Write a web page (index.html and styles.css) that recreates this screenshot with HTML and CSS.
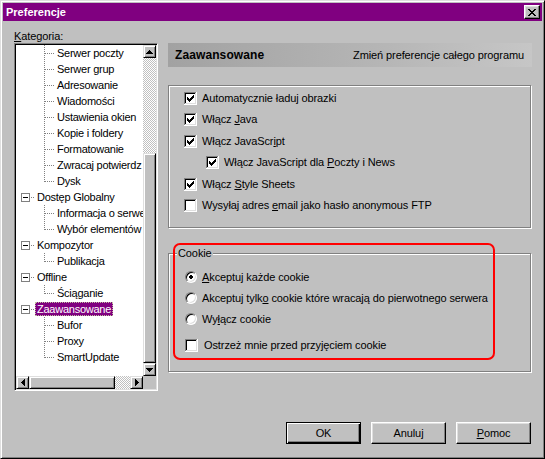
FILE: index.html
```html
<!DOCTYPE html>
<html lang="pl">
<head>
<meta charset="utf-8">
<title>Preferencje</title>
<link rel="stylesheet" href="styles.css">
</head>
<body>
<svg class="defs" width="0" height="0" aria-hidden="true">
  <defs>
    <symbol id="cb-frame" viewBox="0 0 13 13">
      <path d="M0 0h12v1H1v11H0z" fill="#808080"/>
      <path d="M12 0h1v13H0v-1h12z" fill="#fff"/>
      <path d="M1 1h10v1H2v9H1z" fill="#000"/>
      <path d="M11 1h1v11H1v-1h10z" fill="#dfdfdf"/>
      <rect x="2" y="2" width="9" height="9" fill="#fff"/>
    </symbol>
    <symbol id="cb-check" viewBox="0 0 13 13">
      <path d="M9 3h1v1H9zM8 4h2v1H8zM3 5h1v1H3zM7 5h3v1H7zM3 6h2v1H3zM6 6h3v1H6zM3 7h5v1H3zM4 8h3v1H4zM5 9h1v1H5z" fill="#000"/>
    </symbol>
  </defs>
</svg>
<div class="window">
  <div class="titlebar">
    <span class="title">Preferencje</span>
    <span class="close">
      <svg width="8" height="7" viewBox="0 0 8 7" shape-rendering="crispEdges"><path d="M0 0h2v1H0zM6 0h2v1H6zM1 1h2v1H1zM5 1h2v1H5zM2 2h4v1H2zM3 3h2v1H3zM2 4h4v1H2zM1 5h2v1H1zM5 5h2v1H5zM0 6h2v1H0zM6 6h2v1H6z" fill="#000"/></svg>
    </span>
  </div>

  <div class="main">
    <div class="left">
      <div class="cat-label"><u>K</u>ategoria:</div>
      <div class="treebox">
        <div class="tree">
          <div class="row l2"><span class="guide"></span><span class="lbl">Serwer poczty</span></div>
          <div class="row l2"><span class="guide"></span><span class="lbl">Serwer grup</span></div>
          <div class="row l2"><span class="guide"></span><span class="lbl">Adresowanie</span></div>
          <div class="row l2"><span class="guide"></span><span class="lbl">Wiadomości</span></div>
          <div class="row l2"><span class="guide"></span><span class="lbl">Ustawienia okien</span></div>
          <div class="row l2"><span class="guide"></span><span class="lbl">Kopie i foldery</span></div>
          <div class="row l2"><span class="guide"></span><span class="lbl">Formatowanie</span></div>
          <div class="row l2"><span class="guide"></span><span class="lbl">Zwracaj potwierdz</span></div>
          <div class="row l2"><span class="guide last"></span><span class="lbl">Dysk</span></div>
          <div class="row l1"><span class="pm"></span><span class="hd"></span><span class="lbl">Dostęp Globalny</span></div>
          <div class="row l2"><span class="guide"></span><span class="lbl">Informacja o serwe</span></div>
          <div class="row l2"><span class="guide last"></span><span class="lbl">Wybór elementów</span></div>
          <div class="row l1"><span class="pm"></span><span class="hd"></span><span class="lbl">Kompozytor</span></div>
          <div class="row l2"><span class="guide last"></span><span class="lbl">Publikacja</span></div>
          <div class="row l1"><span class="pm"></span><span class="hd"></span><span class="lbl">Offline</span></div>
          <div class="row l2"><span class="guide last"></span><span class="lbl">Ściąganie</span></div>
          <div class="row l1"><span class="pm"></span><span class="hd"></span><span class="lbl sel">Zaawansowane</span></div>
          <div class="row l2"><span class="guide"></span><span class="lbl">Bufor</span></div>
          <div class="row l2"><span class="guide"></span><span class="lbl">Proxy</span></div>
          <div class="row l2"><span class="guide last"></span><span class="lbl">SmartUpdate</span></div>
        </div>
        <div class="vscroll">
          <span class="sb-btn raised"><svg width="7" height="4" viewBox="0 0 7 4"><path d="M3 0h1v1h1v1h1v1h1v1H0V3h1V2h1V1h1z" fill="#000"/></svg></span>
          <span class="track-v"></span>
          <span class="thumb-v raised"></span>
          <span class="sb-btn raised"><svg width="7" height="4" viewBox="0 0 7 4"><path d="M0 0h7v1H6v1H5v1H4v1H3V3H2V2H1V1H0z" fill="#000"/></svg></span>
        </div>
        <div class="hscroll">
          <span class="sb-btn raised"><svg width="4" height="7" viewBox="0 0 4 7"><path d="M3 0h1v7H3V6H2V5H1V4H0V3h1V2h1V1h1z" fill="#000"/></svg></span>
          <span class="thumb-h raised"></span>
          <span class="track-h"></span>
          <span class="sb-btn raised"><svg width="4" height="7" viewBox="0 0 4 7"><path d="M0 0h1v1h1v1h1v1h1v1H3v1H2v1H1v1H0z" fill="#000"/></svg></span>
        </div>
        <div class="corner"></div>
      </div>
    </div>

    <div class="right">
      <div class="header">
        <span class="h-title">Zaawansowane</span>
        <span class="h-desc">Zmień preferencje całego programu</span>
      </div>

      <div class="group g1">
        <div class="crow"><svg class="cb" viewBox="0 0 13 13"><use href="#cb-frame"/><use href="#cb-check"/></svg><span class="ctext">Automatycznie ładuj obrazki</span></div>
        <div class="crow"><svg class="cb" viewBox="0 0 13 13"><use href="#cb-frame"/><use href="#cb-check"/></svg><span class="ctext">Włącz <u>J</u>ava</span></div>
        <div class="crow"><svg class="cb" viewBox="0 0 13 13"><use href="#cb-frame"/><use href="#cb-check"/></svg><span class="ctext">Włącz JavaScr<u>i</u>pt</span></div>
        <div class="crow nested"><svg class="cb" viewBox="0 0 13 13"><use href="#cb-frame"/><use href="#cb-check"/></svg><span class="ctext">Włącz JavaScript dla <u>P</u>oczty i News</span></div>
        <div class="crow"><svg class="cb" viewBox="0 0 13 13"><use href="#cb-frame"/><use href="#cb-check"/></svg><span class="ctext">Włącz <u>S</u>tyle Sheets</span></div>
        <div class="crow"><svg class="cb" viewBox="0 0 13 13"><use href="#cb-frame"/></svg><span class="ctext">Wysyłaj adres <u>e</u>mail jako hasło anonymous FTP</span></div>
      </div>

      <div class="group g2">
        <div class="legend">Cookie</div>
        <div class="rrow first"><span class="radio on"></span><span class="ctext"><u>A</u>kceptuj każde cookie</span></div>
        <div class="rrow"><span class="radio"></span><span class="ctext">Akceptuj tylk<u>o</u> cookie które wracają do pierwotnego serwera</span></div>
        <div class="rrow"><span class="radio"></span><span class="ctext">Wy<u>ł</u>ącz cookie</span></div>
        <div class="crow warn"><svg class="cb" viewBox="0 0 13 13"><use href="#cb-frame"/></svg><span class="ctext">Ostrzeż mnie przed przyjęciem cookie</span></div>
      </div>
    </div>
  </div>

  <div class="buttons">
    <span class="btn default">OK</span>
    <span class="btn">Anuluj</span>
    <span class="btn"><u>P</u>omoc</span>
  </div>

  <div class="annot"></div>
</div>
</body>
</html>
```
FILE: styles.css
```css
* { box-sizing: border-box; }

body {
  margin: 0;
  background: #c0c0c0;
  font-family: "Liberation Sans", Arial, sans-serif;
  font-size: 11px;
  letter-spacing: -0.1px;
  color: #000;
}

.defs { position: absolute; width: 0; height: 0; overflow: hidden; }

u { text-decoration: underline; text-underline-offset: 1px; }

.window {
  position: relative;
  width: 545px;
  height: 459px;
  background: #c0c0c0;
  border: 1px solid;
  border-color: #dfdfdf #000 #000 #dfdfdf;
  box-shadow: inset 1px 1px #fff, inset -1px -1px #808080;
  padding: 2px;
  display: flex;
  flex-direction: column;
}

/* title bar */
.titlebar {
  height: 18px;
  flex: none;
  background: #800080;
  color: #fff;
  display: flex;
  align-items: center;
  justify-content: space-between;
  padding: 0 2px 0 3px;
}
.title { font-weight: bold; font-size: 11px; letter-spacing: 0; }
.close {
  width: 16px;
  height: 14px;
  background: #c0c0c0;
  border: 1px solid;
  border-color: #fff #000 #000 #fff;
  box-shadow: inset -1px -1px #808080, inset 1px 1px #dfdfdf;
  display: flex;
  align-items: center;
  justify-content: center;
}
.close svg { display: block; }

/* main area */
.main {
  display: flex;
  align-items: flex-start;
  gap: 10px;
  padding-left: 11px;
}
.left { width: 144px; margin-top: 8px; }
.right { width: 364px; margin-top: 22px; }

.cat-label { height: 14px; line-height: 14px; }

/* tree box */
.treebox {
  width: 144px;
  height: 348px;
  border: 1px solid;
  border-color: #808080 #fff #fff #808080;
  box-shadow: inset 1px 1px #000, inset -1px -1px #dfdfdf;
  padding: 1px;
  display: grid;
  grid-template-columns: 127px 13px;
  grid-template-rows: 331px 13px;
}
.tree {
  background: #fff;
  overflow: hidden;
}
.row {
  height: 16px;
  display: flex;
  align-items: flex-start;
  white-space: nowrap;
}
.l2 { padding-left: 28px; }
.l1 { padding-left: 5px; }

.guide {
  flex: none;
  width: 11px;
  height: 16px;
  background:
    repeating-linear-gradient(to bottom, #808080 0 1px, transparent 1px 2px) 0 0 / 1px 16px no-repeat,
    repeating-linear-gradient(to right, #808080 0 1px, transparent 1px 2px) 1px 8px / 10px 1px no-repeat;
}
.guide.last {
  background-size: 1px 9px, 10px 1px;
}
.pm {
  flex: none;
  width: 9px;
  height: 9px;
  margin-top: 4px;
  border: 1px solid #808080;
  background: linear-gradient(#000, #000) 1px 3px / 5px 1px no-repeat, #fff;
}
.hd {
  flex: none;
  width: 5px;
  height: 1px;
  margin-top: 8px;
  background: repeating-linear-gradient(to right, #fff 0 1px, #808080 1px 2px);
}
.lbl {
  height: 14px;
  line-height: 14px;
  margin-top: 1px;
  padding: 0 2px;
  letter-spacing: -0.25px;
}
.lbl.sel {
  background: #800080;
  color: #fff;
  outline: 1px dotted #c0c0a0;
  outline-offset: -1px;
}

/* scrollbars */
.raised {
  background: #c0c0c0;
  border: 1px solid;
  border-color: #dfdfdf #000 #000 #dfdfdf;
  box-shadow: inset 1px 1px #fff, inset -1px -1px #808080;
}
.sb-btn {
  flex: none;
  width: 13px;
  height: 13px;
  display: flex;
  align-items: center;
  justify-content: center;
}
.sb-btn svg { display: block; }
.vscroll { display: flex; flex-direction: column; }
.hscroll { display: flex; }
.track-v, .track-h {
  flex: none;
  background: repeating-conic-gradient(#c0c0c0 0 25%, #fff 0 50%) 0 0 / 2px 2px;
}
.track-v { height: 95px; }
.thumb-v { flex: none; height: 210px; }
.thumb-h { flex: none; width: 86px; }
.track-h { width: 15px; }
.corner { background: #c0c0c0; }

/* right panel */
.header {
  height: 24px;
  display: flex;
  align-items: center;
  justify-content: space-between;
  padding: 0 8px 0 7px;
  background: linear-gradient(to right, #a2a2a2, #b6b6b6 60%, #c6c6c6);
}
.h-title { font-weight: bold; font-size: 12px; letter-spacing: 0.1px; }

.group {
  width: 363px;
  border: 1px solid #808080;
  box-shadow: inset 1px 1px #fff, 1px 1px #fff;
}
.g1 { margin-top: 18px; height: 143px; padding-top: 2px; }
.g2 { margin-top: 25px; height: 119px; }

.crow {
  height: 21px;
  display: flex;
  align-items: flex-start;
  padding-left: 15px;
  white-space: nowrap;
}
.g1 .crow:nth-child(even) { height: 22px; }
.crow.nested { padding-left: 37px; }
.cb {
  flex: none;
  width: 13px;
  height: 13px;
  margin-top: 4px;
  margin-right: 5px;
  shape-rendering: crispEdges;
}
.ctext { line-height: 21px; height: 21px; }

.legend {
  width: fit-content;
  height: 13px;
  line-height: 13px;
  margin: -7px 0 0 8px;
  padding: 0 1px;
  background: #c0c0c0;
}
.rrow {
  height: 21px;
  display: flex;
  align-items: flex-start;
  padding-left: 16px;
  white-space: nowrap;
}
.rrow.first { margin-top: 7px; }
.radio {
  flex: none;
  width: 12px;
  height: 12px;
  margin-top: 4px;
  margin-right: 5px;
  border-radius: 50%;
  border: 1px solid;
  border-color: #808080 #fff #fff #808080;
  box-shadow: inset 1px 1px #000, inset -1px -1px #dfdfdf;
  background: #fff;
}
.radio.on {
  background: radial-gradient(circle, #000 0 2px, #fff 2.1px);
}
.crow.warn { margin-top: 5px; padding-left: 16px; }
.crow.warn .cb { margin-right: 6px; }

/* buttons */
.buttons {
  margin-top: auto;
  margin-bottom: 12px;
  padding-right: 11px;
  display: flex;
  justify-content: flex-end;
  gap: 10px;
}
.btn {
  width: 75px;
  height: 22px;
  display: flex;
  align-items: center;
  justify-content: center;
  background: #c0c0c0;
  border: 1px solid;
  border-color: #fff #000 #000 #fff;
  box-shadow: inset -1px -1px #808080, inset 1px 1px #dfdfdf;
}
.btn.default {
  border: 1px solid #000;
  box-shadow: inset 1px 1px #fff, inset -1px -1px #000, inset -2px -2px #808080;
}

/* red annotation drawn over the cookie group */
.annot {
  position: absolute;
  left: 172px;
  top: 242px;
  width: 322px;
  height: 117px;
  border: 2px solid #ff0000;
  border-radius: 7px;
  pointer-events: none;
}
```
